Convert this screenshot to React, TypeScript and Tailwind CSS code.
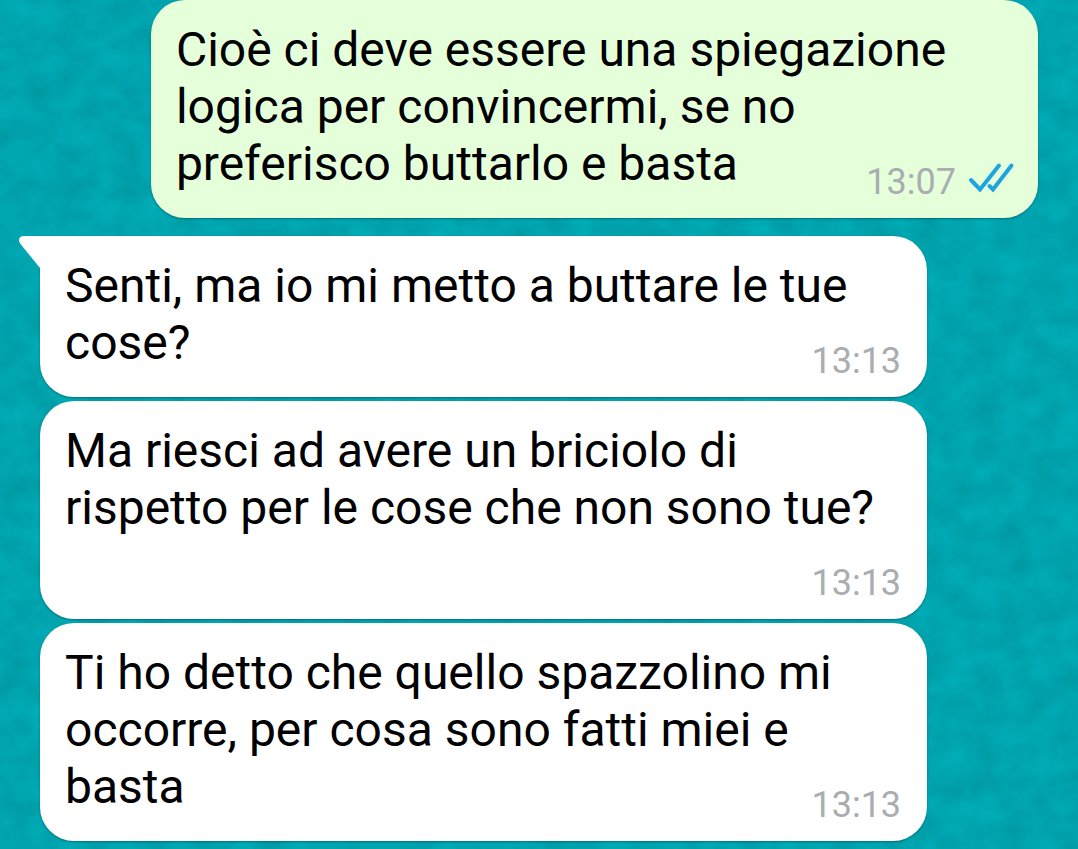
type Message = {
  id: number;
  text: string;
  time: string;
  outgoing?: boolean;
  tail?: boolean;
};

const messages: Message[] = [
  {
    id: 1,
    text: "Cioè ci deve essere una spiegazione logica per convincermi, se no preferisco buttarlo e basta",
    time: "13:07",
    outgoing: true,
  },
  { id: 2, text: "Senti, ma io mi metto a buttare le tue cose?", time: "13:13", tail: true },
  { id: 3, text: "Ma riesci ad avere un briciolo di rispetto per le cose che non sono tue?", time: "13:13" },
  { id: 4, text: "Ti ho detto che quello spazzolino mi occorre, per cosa sono fatti miei e basta", time: "13:13" },
];

function Wallpaper() {
  return (
    <svg className="absolute inset-0 h-full w-full" aria-hidden="true">
      <filter id="plaster" x="0" y="0" width="100%" height="100%" colorInterpolationFilters="sRGB">
        <feTurbulence type="fractalNoise" baseFrequency="0.035 0.04" numOctaves="3" seed="8" />
        <feColorMatrix
          type="matrix"
          values="0 0 0 0 0
                  0.11 0 0 0 0.588
                  0.11 0 0 0 0.628
                  0 0 0 0 1"
        />
      </filter>
      <rect width="100%" height="100%" fill="#00a5b0" />
      <rect width="100%" height="100%" filter="url(#plaster)" />
    </svg>
  );
}

function ReadTicks() {
  return (
    <svg
      className="h-10 w-11 overflow-visible"
      viewBox="0 0 44 40"
      fill="none"
      stroke="#1da5df"
      strokeWidth="4"
      strokeLinecap="round"
      strokeLinejoin="miter"
      role="img"
      aria-label="Letto"
    >
      <path d="M3 18 L12 27.500 L31 3.500" />
      <path d="M21.500 24 L25 27.500 L43.500 3.500" />
    </svg>
  );
}

function Tail() {
  return (
    <svg className="absolute top-0 -left-[21px] h-[34px] w-[22px]" viewBox="0 0 22 34" aria-hidden="true">
      <path d="M22 0 H5 C0 0 -1.500 4 1.500 8 L21 32 L22 34 Z" fill="#ffffff" />
    </svg>
  );
}

function Bubble({ message }: { message: Message }) {
  const { text, time, outgoing, tail } = message;
  return (
    <li
      className={`relative flow-root w-8/9 rounded-[34px] pt-[21px] pr-[26px] pb-4 pl-[25px] text-[48px] leading-[57px] text-black shadow-[0_1px_2px_rgba(0,60,70,0.5)] ${
        outgoing ? "mb-[14px] self-end bg-[#e6ffdb]" : "self-start bg-white"
      } ${tail ? "rounded-tl-none" : ""}`}
    >
      {tail && <Tail />}
      {text}
      <div className="float-right mt-[27px] ml-8 flex h-10 items-center gap-3 text-[36px] leading-10 text-[#a9adb0]">
        <time>{time}</time>
        {outgoing && <ReadTicks />}
      </div>
    </li>
  );
}

export default function App() {
  return (
    <main className="relative min-h-screen overflow-hidden bg-[#00a5b0] font-['Roboto',sans-serif]">
      <Wallpaper />
      <ul className="relative flex flex-col gap-1 px-10 pb-2">
        {messages.map((message) => (
          <Bubble key={message.id} message={message} />
        ))}
      </ul>
    </main>
  );
}
